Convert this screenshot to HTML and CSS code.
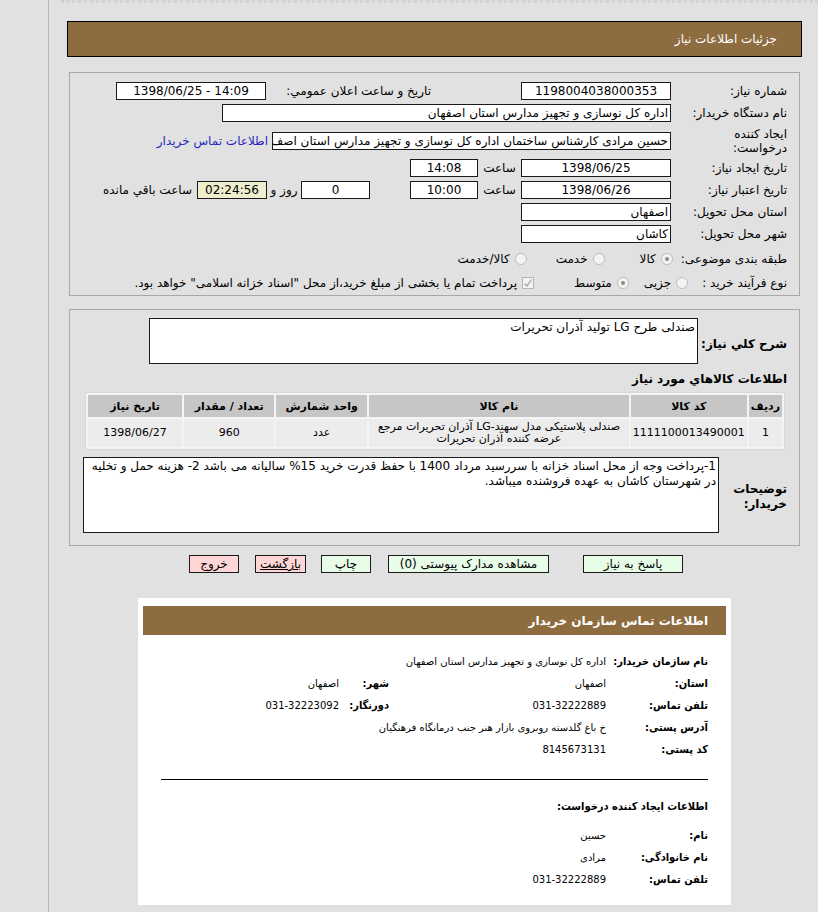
FILE: index.html
```html
<!DOCTYPE html>
<html lang="fa" dir="rtl">
<head>
<meta charset="utf-8">
<title>جزئیات اطلاعات نیاز</title>
<link rel="stylesheet" href="styles.css">
</head>
<body>
<div class="page">
  <div class="dots"></div>
  <div class="title-bar">جزئیات اطلاعات نیاز</div>

  <div class="panel form">
    <div class="row r1">
      <div class="lbl">شماره نیاز:</div>
      <div class="box w150 num">1198004038000353</div>
      <div class="lbl-ann">تاریخ و ساعت اعلان عمومي:</div>
      <div class="box w150 num">1398/06/25 - 14:09</div>
    </div>
    <div class="row">
      <div class="lbl">نام دستگاه خریدار:</div>
      <div class="box w449 txt">اداره کل نوسازی و تجهیز مدارس استان اصفهان</div>
    </div>
    <div class="row r3">
      <div class="lbl two">ایجاد کننده درخواست:</div>
      <div class="box w399 txt">حسین مرادی کارشناس ساختمان اداره کل نوسازی و تجهیز مدارس استان اصف</div>
      <a class="link">اطلاعات تماس خریدار</a>
    </div>
    <div class="row">
      <div class="lbl">تاریخ ایجاد نیاز:</div>
      <div class="box w150 num">1398/06/25</div>
      <div class="sep">ساعت</div>
      <div class="box w68 num">14:08</div>
    </div>
    <div class="row">
      <div class="lbl">تاریخ اعتبار نیاز:</div>
      <div class="box w150 num">1398/06/26</div>
      <div class="sep">ساعت</div>
      <div class="box w68 num">10:00</div>
      <div class="box w69 num days">0</div>
      <div class="sep2">روز و</div>
      <div class="box w70 num remain">02:24:56</div>
      <div class="rest">ساعت باقي مانده</div>
    </div>
    <div class="row">
      <div class="lbl">استان محل تحویل:</div>
      <div class="box w150 txt">اصفهان</div>
    </div>
    <div class="row">
      <div class="lbl">شهر محل تحویل:</div>
      <div class="box w150 txt">کاشان</div>
    </div>
    <div class="row r8">
      <div class="lbl-auto">طبقه بندی موضوعی:</div>
      <span class="radio on m6"></span><span class="opt">کالا</span>
      <span class="radio m35"></span><span class="opt">خدمت</span>
      <span class="radio m29"></span><span class="opt">کالا/خدمت</span>
    </div>
    <div class="row r9">
      <div class="lbl-auto">نوع فرآیند خرید :</div>
      <span class="radio m15a"></span><span class="opt">جزیی</span>
      <span class="radio on m15"></span><span class="opt">متوسط</span>
      <span class="check m40"><svg width="10" height="10" viewBox="0 0 10 10"><polyline points="1.5,5.5 4,8 8.5,1.5" fill="none" stroke="#a0a0a0" stroke-width="1.3"/></svg></span>
      <span class="opt">پرداخت تمام یا بخشی از مبلغ خرید،از محل "اسناد خزانه اسلامی" خواهد بود.</span>
    </div>
  </div>

  <div class="panel detail">
    <div class="drow">
      <div class="blbl w89">شرح کلي نياز:</div>
      <div class="area a1">صندلی طرح LG تولید آذران تحریرات<span class="grip"></span></div>
    </div>
    <div class="heading">اطلاعات کالاهاي مورد نياز</div>
    <table class="items">
      <thead>
        <tr>
          <th class="c1">ردیف</th>
          <th class="c2">کد کالا</th>
          <th class="c3">نام کالا</th>
          <th class="c4">واحد شمارش</th>
          <th class="c5">تعداد / مقدار</th>
          <th class="c6">تاریخ نیاز</th>
        </tr>
      </thead>
      <tbody>
        <tr>
          <td>1</td>
          <td>1111100013490001</td>
          <td>صندلی پلاستیکی مدل سهند-LG آذران تحریرات مرجع عرضه کننده آذران تحریرات</td>
          <td>عدد</td>
          <td>960</td>
          <td>1398/06/27</td>
        </tr>
      </tbody>
    </table>
    <div class="drow d2">
      <div class="blbl w68b">توضیحات خریدار:</div>
      <div class="area a2">1-پرداخت وجه از محل اسناد خزانه با سررسید مرداد 1400 با حفظ قدرت خرید 15% سالیانه می باشد 2- هزینه حمل و تخلیه در شهرستان کاشان به عهده فروشنده میباشد.<span class="grip"></span></div>
    </div>
  </div>

  <div class="buttons">
    <span class="btn green b1">پاسخ به نیاز</span>
    <span class="btn green b2">مشاهده مدارک پیوستی (0)</span>
    <span class="btn green b3">چاپ</span>
    <span class="btn pink b4"><u>بازگشت</u></span>
    <span class="btn pink b5">خروج</span>
  </div>

  <div class="card">
    <div class="card-head">اطلاعات تماس سازمان خریدار</div>
    <div class="crow first">
      <div class="cl">نام سازمان خریدار:</div>
      <div class="cv wide">اداره کل نوسازی و تجهیز مدارس استان اصفهان</div>
    </div>
    <div class="crow">
      <div class="cl">استان:</div>
      <div class="cv">اصفهان</div>
      <div class="cl2">شهر:</div>
      <div class="cv2">اصفهان</div>
    </div>
    <div class="crow">
      <div class="cl">تلفن تماس:</div>
      <div class="cv">031-32222889</div>
      <div class="cl2">دورنگار:</div>
      <div class="cv2">031-32223092</div>
    </div>
    <div class="crow">
      <div class="cl">آدرس پستی:</div>
      <div class="cv wide">خ باغ گلدسته روبروی بازار هنر جنب درمانگاه فرهنگیان</div>
    </div>
    <div class="crow">
      <div class="cl">کد پستی:</div>
      <div class="cv">8145673131</div>
    </div>
    <div class="rule"></div>
    <div class="csub">اطلاعات ایجاد کننده درخواست:</div>
    <div class="crow">
      <div class="cl">نام:</div>
      <div class="cv">حسین</div>
    </div>
    <div class="crow">
      <div class="cl">نام خانوادگی:</div>
      <div class="cv">مرادی</div>
    </div>
    <div class="crow">
      <div class="cl">تلفن تماس:</div>
      <div class="cv">031-32222889</div>
    </div>
  </div>
</div>
</body>
</html>
```
FILE: styles.css
```css
* { box-sizing: border-box; }
html, body { margin: 0; padding: 0; }
body {
  background: #e1e1e1;
  font-family: Tahoma, "DejaVu Sans", sans-serif;
  font-size: 12px;
  color: #000;
  width: 818px;
  height: 912px;
  overflow: hidden;
}
.page {
  margin-left: 48px;
  border-left: 1px solid #b6b6b6;
  min-height: 912px;
  padding: 0 16px 0 18px;
}
.dots {
  height: 3px;
  border-top: 3px dotted #d2d2d2;
  margin-left: -6px;
  margin-right: -16px;
}
.title-bar {
  margin-top: 18px;
  height: 36px;
  background: #8d6c40;
  border: 1px solid #000;
  color: #fff;
  display: flex;
  align-items: center;
  padding-right: 24px;
  font-size: 12px;
}
.panel {
  margin: 15px 2px 0 2px;
  border: 1px solid #a8a8a8;
}
.form { padding: 7px 12px 1px 12px; height: 224px; }
.row {
  display: flex;
  align-items: center;
  min-height: 22px;
  white-space: nowrap;
}
.r3 { min-height: 33px; }
.r8 { min-height: 25px; margin-top: 1px; }
.r9 { min-height: 24px; }
.lbl { width: 116px; flex: none; }
.lbl.two { white-space: normal; line-height: 14px; width: 116px; padding-left: 40px; }
.lbl-auto { flex: none; }
.lbl-ann { width: 165px; margin-right: 90px; flex: none; }
.box {
  flex: none;
  height: 18px;
  background: #fff;
  border: 1px solid #1a1a1a;
  line-height: 16px;
  overflow: hidden;
  white-space: nowrap;
}
.num { direction: ltr; text-align: center; }
.txt { text-align: right; padding-right: 2px; }
.w150 { width: 150px; }
.w449 { width: 449px; }
.w399 { width: 399px; }
.w68 { width: 68px; }
.w69 { width: 69px; }
.w70 { width: 70px; }
.days { margin-right: 40px; }
.remain { background: #efefce; }
.sep { width: 43px; text-align: center; flex: none; }
.sep2 { width: 34px; text-align: center; flex: none; }
.rest { margin-right: 5px; }
.link { color: #2727c0; margin-right: 4px; text-decoration: none; }

.radio {
  flex: none;
  width: 12px;
  height: 12px;
  border-radius: 50%;
  border: 1px solid #bcbcbc;
  background: #f3f3f3;
  position: relative;
  display: inline-block;
}
.radio.on::after {
  content: "";
  position: absolute;
  left: 3px; top: 3px;
  width: 4px; height: 4px;
  border-radius: 50%;
  background: #8a8a8a;
}
.opt { margin-right: 5px; }
.check {
  flex: none;
  width: 12px;
  height: 12px;
  border: 1px solid #b4b4b4;
  background: #f3f3f3;
  display: inline-flex;
  align-items: center;
  justify-content: center;
}
.m6 { margin-right: 8px; }
.m35 { margin-right: 35px; }
.m29 { margin-right: 29px; }
.m15a { margin-right: 14px; }
.m15 { margin-right: 15px; }
.m40 { margin-right: 40px; }

.detail { margin-top: 13px; padding: 8px 12px 12px 12px; }
.drow { display: flex; align-items: center; }
.blbl { font-weight: bold; font-size: 12px; flex: none; }
.w89 { width: 89px; padding-top: 6px; white-space: nowrap; }
.w68b { width: 68px; line-height: 15px; padding-top: 4px; }
.area {
  position: relative;
  background: #fff;
  border: 1px solid #1a1a1a;
  text-align: right;
  padding: 1px 2px;
  line-height: 15px;
}
.a1 { width: 549px; height: 46px; }
.a2 { width: 636px; height: 76px; }
.grip {
  position: absolute;
  left: 2px;
  bottom: 2px;
  width: 6px;
  height: 6px;
  background-image: radial-gradient(circle, #c4c4c4 0.5px, transparent 0.6px);
  background-size: 2px 2px;
}
.heading { font-weight: bold; font-size: 12px; margin-top: 7px; height: 16px; line-height: 16px; }
.d2 { margin-top: 7px; }

.items {
  margin-top: 5px;
  margin-right: 2px;
  width: 700px;
  border-collapse: separate;
  border-spacing: 2px;
  border: 1px solid #d8d8d8;
  background: #f4f4f4;
}
.items th {
  background: #c6c6c6;
  font-weight: bold;
  font-size: 11px;
  height: 22px;
  padding: 0 2px;
  text-align: center;
}
.items td {
  background: #ececec;
  height: 28px;
  text-align: center;
  font-size: 11px;
  line-height: 12px;
  padding: 0 2px;
}
.items .c1 { width: 26px; }
.items .c2 { width: 102px; }
.items .c3 { width: 275px; }
.items .c4 { width: 94px; }
.items .c5 { width: 94px; }
.items .c6 { width: 96px; }

.buttons {
  display: flex;
  margin-top: 9px;
  padding-right: 119px;
}
.btn {
  height: 18px;
  line-height: 16px;
  border: 1px solid #1a1a1a;
  text-align: center;
  flex: none;
}
.green { background: #e8fde8; }
.pink { background: #ffd6d6; }
.b1 { width: 100px; }
.b2 { width: 161px; margin-right: 34px; }
.b3 { width: 50px; margin-right: 17px; }
.b4 { width: 51px; margin-right: 15px; }
.b5 { width: 50px; margin-right: 16px; }

.card {
  width: 593px;
  margin-top: 25px;
  margin-right: 71px;
  background: #fff;
  padding: 8px 5px 15px 5px;
  height: 307px;
}
.card-head {
  height: 29px;
  background: #8d6c40;
  color: #fff;
  font-weight: bold;
  font-size: 12px;
  display: flex;
  align-items: center;
  padding-right: 18px;
}
.crow.first { margin-top: 15px; }
.crow {
  display: flex;
  align-items: center;
  height: 22px;
  padding-right: 18px;
  white-space: nowrap;
}
.cl { width: 102px; font-family: "DejaVu Sans Condensed", "DejaVu Sans", sans-serif; font-weight: bold; font-size: 11px; flex: none; }
.cv { width: 217px; font-size: 10px; flex: none; }
.cv.wide { width: auto; }
.cl2 { width: 50px; font-family: "DejaVu Sans Condensed", "DejaVu Sans", sans-serif; font-weight: bold; font-size: 11px; flex: none; }
.cv2 { font-size: 10px; }
.rule {
  margin: 19px 18px 0 18px;
  border-top: 1px solid #000;
}
.csub {
  font-family: "DejaVu Sans Condensed", "DejaVu Sans", sans-serif;
  font-weight: bold;
  font-size: 11px;
  margin-top: 19px;
  padding-right: 18px;
  height: 16px;
  line-height: 16px;
  margin-bottom: 9px;
}
```
